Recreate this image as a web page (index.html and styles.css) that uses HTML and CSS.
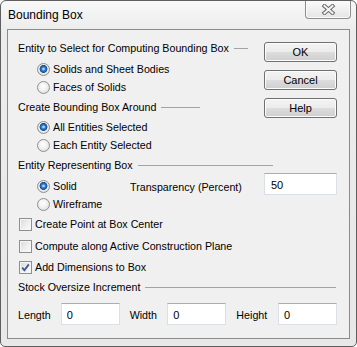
FILE: index.html
```html
<!DOCTYPE html>
<html lang="en">

<head>
    <meta charset="UTF-8">
    <title>Bounding Box</title>
    <link rel="stylesheet" href="styles.css">
</head>

<body>
    <div class="window">
        <div class="titlebar">
            <span class="title">Bounding Box</span>
            <button class="close-btn">
                <svg width="15" height="11" viewBox="0 0 15 11">
                    <path d="M3.5 2 L11.5 9 M11.5 2 L3.5 9" stroke="#6b6b6b" stroke-width="4" stroke-linecap="square" fill="none"/>
                    <path d="M3.5 2 L11.5 9 M11.5 2 L3.5 9" stroke="#f3f3f3" stroke-width="2" stroke-linecap="square" fill="none"/>
                </svg>
            </button>
        </div>

        <div class="client">
            <div class="top">
                <div class="left-col">
                    <div class="group-head head-select"><span>Entity to Select for Computing Bounding Box</span><i class="rule"></i></div>
                    <label class="opt first"><span class="radio checked"></span>Solids and Sheet Bodies</label>
                    <label class="opt"><span class="radio"></span>Faces of Solids</label>

                    <div class="group-head head-around gap2"><span>Create Bounding Box Around</span><i class="rule"></i></div>
                    <label class="opt gap2"><span class="radio checked"></span>All Entities Selected</label>
                    <label class="opt"><span class="radio"></span>Each Entity Selected</label>
                </div>

                <div class="buttons">
                    <button class="btn">OK</button>
                    <button class="btn">Cancel</button>
                    <button class="btn">Help</button>
                </div>
            </div>

            <div class="group-head head-rep gap2"><span>Entity Representing Box</span><i class="rule"></i></div>
            <div class="solid-row">
                <label class="opt solid-opt"><span class="radio checked"></span>Solid</label>
                <span class="field-label">Transparency (Percent)</span>
                <input class="edit transp" type="text" value="50">
            </div>
            <label class="opt"><span class="radio"></span>Wireframe</label>

            <label class="check-row gap2"><span class="check"></span>Create Point at Box Center</label>
            <label class="check-row gap4"><span class="check"></span>Compute along Active Construction Plane</label>
            <label class="check-row gap3"><span class="check checked">
                <svg width="11" height="11" viewBox="0 0 11 11">
                    <path d="M2.2 5.6 L4.4 8.2 L8.8 2.4" stroke="#42598c" stroke-width="1.8" fill="none"/>
                </svg>
            </span>Add Dimensions to Box</label>

            <div class="group-head head-stock gap2"><span>Stock Oversize Increment</span><i class="rule"></i></div>
            <div class="dims-row">
                <span class="dim-label len">Length</span>
                <input class="edit dim-in" type="text" value="0">
                <span class="dim-label wid">Width</span>
                <input class="edit dim-in" type="text" value="0">
                <span class="dim-label hgt">Height</span>
                <input class="edit dim-in last" type="text" value="0">
            </div>
        </div>
    </div>
</body>

</html>
```

FILE: styles.css
```css
:root {
    --face: #f0f0f0;
    --frame-line: #5f5f5f;
    --group-line: #a3a3a3;
    --ctrl-border: #8e8f8f;
}

* {
    box-sizing: border-box;
}

body {
    margin: 0;
    background: #ffffff;
    font-family: 'Liberation Sans', Arial, sans-serif;
    font-size: 11px;
    color: #000;
}

.window {
    width: 357px;
    height: 347px;
    border: 1px solid var(--frame-line);
    border-radius: 6px 6px 5px 5px;
    background: linear-gradient(#f8f8f8, #ececec 30px, #e8e8e8);
    display: flex;
    flex-direction: column;
    overflow: hidden;
}

.titlebar {
    height: 28px;
    flex: none;
    display: flex;
    align-items: flex-start;
    justify-content: space-between;
    padding-left: 7px;
}

.title {
    font-size: 12px;
    line-height: 28px;
}

.close-btn {
    width: 46px;
    height: 19px;
    margin: -1px 5px 0 0;
    padding: 0;
    border: 1px solid #8d8d8d;
    border-top: none;
    border-radius: 0 0 4px 4px;
    background: linear-gradient(#fdfdfd, #e4e4e4);
    box-shadow: inset 0 0 0 1px #fbfbfb;
    display: flex;
    align-items: center;
    justify-content: center;
}

.client {
    flex: 1;
    margin: 0 6px 7px 6px;
    border: 1px solid #8b8b8b;
    background: var(--face);
    padding: 9px 12px 0 10px;
    font-size: 10.7px;
}

.top {
    display: flex;
    justify-content: space-between;
}

.left-col {
    width: 230px;
}

.group-head {
    display: flex;
    align-items: center;
    height: 18px;
    white-space: nowrap;
}

.group-head .rule {
    flex: 1;
    height: 1px;
    margin-left: 5px;
    background: var(--group-line);
}

.head-select { width: 230px; }
.head-around { width: 182px; }
.head-rep { width: 255px; }
.head-stock { width: 318px; }

.gap2 { margin-top: 2px; }
.gap3 { margin-top: 3px; }
.gap4 { margin-top: 4px; }

.opt {
    display: flex;
    align-items: center;
    gap: 3px;
    height: 18px;
    padding-left: 19px;
}

.opt.first {
    margin-top: 3px;
}

.radio {
    width: 13px;
    height: 13px;
    border-radius: 50%;
    border: 1px solid var(--ctrl-border);
    background: radial-gradient(circle at 45% 40%, #ffffff, #f2f2f2 40%, #d6d6d6);
    flex: none;
}

.radio.checked {
    background: radial-gradient(circle at 50% 45%, #a8dcff 0 0.8px, #3a85d3 1.6px, #1e5aa5 3.2px, #174a88 3.6px, #f6f6f6 4.3px, #e6e6e6 5px, #d2d2d2);
}

.buttons {
    display: flex;
    flex-direction: column;
    gap: 8px;
    margin-top: 3px;
}

.btn {
    width: 73px;
    height: 20px;
    padding: 0;
    border: 1px solid #707070;
    border-radius: 3px;
    background: linear-gradient(#f3f3f3, #ececec 50%, #dddddd 50%, #cfcfcf);
    box-shadow: inset 0 0 0 1px #fcfcfc;
    font-family: inherit;
    font-size: 11px;
    color: #000;
}

.solid-row {
    display: flex;
    align-items: center;
    height: 18px;
    margin-top: 3px;
}

.solid-opt {
    width: 112px;
}

.field-label {
    flex: 1;
    padding-top: 1px;
}

.edit {
    height: 22px;
    padding: 2px 5px 0;
    border: 1px solid #dbdfe6;
    border-top-color: #abadb3;
    background: #ffffff;
    font-family: inherit;
    font-size: 11px;
    line-height: 14px;
    color: #000;
    vertical-align: top;
    outline: none;
}

.transp {
    width: 73px;
    align-self: flex-end;
    padding-left: 6px;
}

.check-row {
    display: flex;
    align-items: center;
    gap: 3px;
    height: 18px;
    padding-left: 1px;
}

.check {
    width: 13px;
    height: 13px;
    border: 1px solid var(--ctrl-border);
    background: linear-gradient(135deg, #d9d9d9, #f0f0f0 60%, #fbfbfb);
    box-shadow: inset 0 0 0 1px #f5f5f5;
    display: flex;
    align-items: center;
    justify-content: center;
    flex: none;
}

.dims-row {
    display: flex;
    align-items: center;
    height: 22px;
    margin-top: 7px;
}

.dim-label.len { width: 43px; }
.dim-label.wid { width: 38px; }
.dim-label.hgt { width: 42px; }

.dim-label {
    padding-top: 2px;
}

.dim-in {
    width: 59px;
    margin-right: 10px;
}

.dim-in.last {
    margin-right: 0;
    width: 59px;
}
```
